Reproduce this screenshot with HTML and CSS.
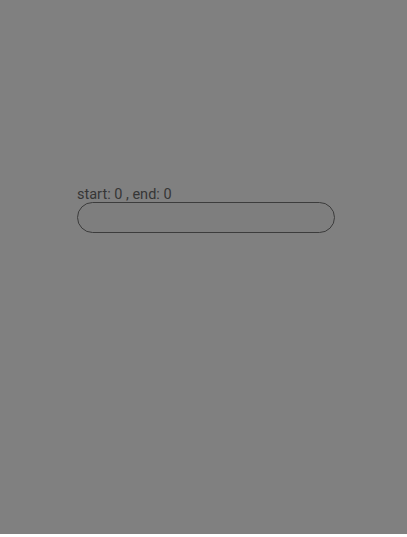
FILE: index.html
```html
<!DOCTYPE html>
<html>
<head>
<meta charset="utf-8">
<link rel="stylesheet" href="styles.css">
</head>
<body>
<div class="stage">
  <div class="panel">
    <div class="label">start: 0 , end: 0</div>
    <div class="field"></div>
  </div>
</div>
</body>
</html>
```
FILE: styles.css
```css
html, body {
  margin: 0;
  padding: 0;
  background: #ffffff;
}
.stage {
  height: 534px;
  background: #808080;
  box-sizing: border-box;
  padding: 187px 0 0 77px;
}
.panel {
  display: flex;
  flex-direction: column;
  width: 258px;
}
.label {
  font-family: Roboto, sans-serif;
  font-size: 14.5px;
  line-height: 15px;
  color: #363636;
}
.field {
  height: 31px;
  box-sizing: border-box;
  border: 1px solid #3c3c3c;
  border-radius: 16px;
  background: #7e7e7e;
}
```
